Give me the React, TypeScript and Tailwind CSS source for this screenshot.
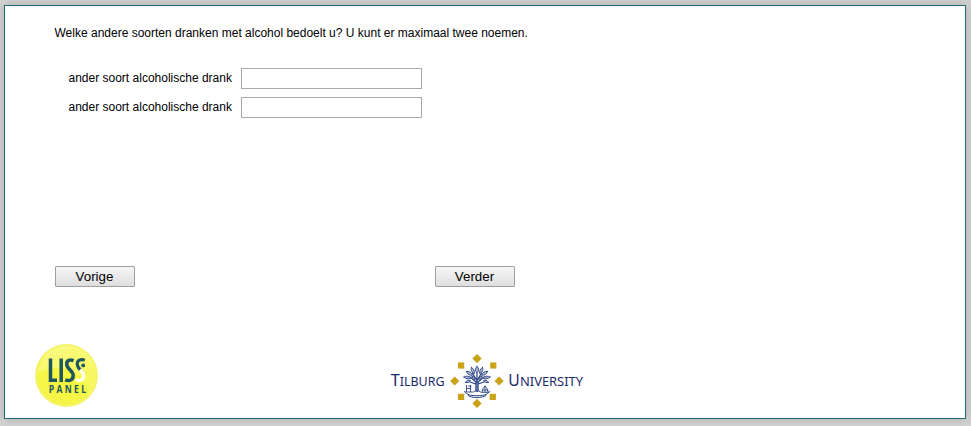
import React from "react";

const NAVY = "#1b2a6b";
const GOLD = "#c9a218";

function AnswerRow({ id }: { id: string }) {
  return (
    <div className="flex h-[21px] items-center">
      <label htmlFor={id} className="w-[172.5px] pb-[2px] text-[12px] leading-[14px] whitespace-nowrap">
        ander soort alcoholische drank
      </label>
      <input id={id} type="text" className="h-[21px] w-[181px] border border-[#a9a9a9] bg-white px-1 text-[12px] outline-none" />
    </div>
  );
}

function NavButton({ label }: { label: string }) {
  return (
    <button
      type="button"
      className="flex h-[21px] w-20 items-center justify-center rounded-[1px] border border-[#a0a0a0] bg-linear-to-b from-[#f6f6f6] to-[#dedede] pr-px text-[13.333px] leading-[15px] text-black"
    >
      {label}
    </button>
  );
}

function LissLogo() {
  return (
    <svg width="64" height="64" viewBox="0 0 64 64" className="block">
      <defs>
        <radialGradient id="ball" cx="50%" cy="50%" r="50%">
          <stop offset="0" stopColor="#f7f73c" />
          <stop offset="0.9" stopColor="#f5f549" />
          <stop offset="1" stopColor="#f3f37c" />
        </radialGradient>
        <linearGradient id="shine" x1="0" y1="0" x2="0.4" y2="1">
          <stop offset="0" stopColor="#ffffc0" stopOpacity="0.5" />
          <stop offset="1" stopColor="#ffff90" stopOpacity="0.3" />
        </linearGradient>
      </defs>
      <circle cx="31.5" cy="31.5" r="31.5" fill="url(#ball)" />
      <path d="M3 29C6 10 18 2 32 2c18 0 29 14 29 30 0 8-3 15-8 20C55 32 30 16 3 29Z" fill="url(#shine)" />
      <g fill="none" stroke="#1d5560" strokeWidth="3.5">
        <path d="M15.500 14.500v21.800h6.500" />
        <path d="M26.200 14.500v23.600" />
        <path d="M38.600 16.700c-3.700-1.500-6.900-.4-6.900 3.200 0 5.300 6.500 6.300 6.500 11.700 0 4.500-3.700 5.800-8 4.200" />
        <path d="M49.800 16.100c-4-1.300-7.600 0-7.600 3.800 0 2.700 1.700 4.500 3.400 6.300" strokeWidth="3.100" />
      </g>
      <path d="M45 25.700c2.200 2.100 3.600 3.800 3.600 6.200 0 4.200-3.600 5.500-8 3.900" fill="none" stroke="#fffff0" strokeWidth="3.300" />
      <circle cx="48.200" cy="21.400" r="1.900" fill="#1d5560" />
      <text
        transform="translate(13.700 48.600) scale(0.860 1)"
        textLength="43.500"
        lengthAdjust="spacing"
        fontFamily="'Open Sans', sans-serif"
        fontWeight="700"
        fontSize="10"
        fill="#1d5560"
      >
        PANEL
      </text>
    </svg>
  );
}

function Crest() {
  return (
    <svg width="54" height="54" viewBox="0 0 54 54" className="block">
      <g fill={GOLD}>
        <path d="M27 0l4.600 4.600L27 9.200l-4.600-4.600Z" />
        <path d="M27 44.800l4.600 4.600L27 54l-4.600-4.600Z" />
        <path d="M4.700 22.400L9.300 27l-4.600 4.600L.1 27Z" />
        <path d="M49.100 22.400l4.600 4.600-4.600 4.600-4.600-4.600Z" />
        <path d="M8 8.400h6.200v6.200H8Z" />
        <path d="M40.200 8.400h6.200v6.200h-6.200Z" />
        <path d="M8 39.800h6.200V46H8Z" />
        <path d="M39.700 39.800h6.200V46h-6.200Z" />
      </g>
      <g fill="none" stroke="#2b4385" strokeWidth="0.900" strokeLinejoin="round" strokeLinecap="round">
        <path d="M26 37V28l-6-5M28 37V28l6-5M27 28V19M26.500 26l-4-7M27.500 26l4-7M26 30l-6-2M28 30l6-2" strokeWidth="1.200" />
        <g fill="#a9b4d2">
          <path d="M27 12.500c-2.500 2.500-2 4.500 0 6.500 2-2 2.500-4 0-6.500Z" />
          <path d="M21.500 13.500c-1 3 0 5 3 6 0-3-1-5-3-6ZM32.500 13.500c1 3 0 5-3 6 0-3 1-5 3-6Z" />
          <path d="M16.500 17.500c1 3 3 4 6 3.500-1-2.500-3-4-6-3.500ZM37.500 17.500c-1 3-3 4-6 3.500 1-2.500 3-4 6-3.500Z" />
          <path d="M14 23c2 2 4 2.500 7 1-2-2-5-2.500-7-1ZM40 23c-2 2-4 2.500-7 1 2-2 5-2.500 7-1Z" />
          <path d="M15.500 28.500c2 .5 4 0 5-2-2-1-4 0-5 2ZM38.500 28.500c-2 .5-4 0-5-2 2-1 4 0 5 2Z" />
          <path d="M22 22c0 2 1 3 3 3.500 0-2-1-3-3-3.500ZM32 22c0 2-1 3-3 3.500 0-2 1-3 3-3.500Z" />
        </g>
        <path d="M16.500 31.500v6M16.500 34.500h4M18.500 32h2.500M20.500 31.500v6M15.500 38h7M23.500 38l2.500-1.500 1 1.500 1-1.500 2.500 1.500M32 38l1-3.500 2-2.500 2 2.500 1 3.500M32.500 36h5.500M31.500 38.300h7.500M35 32v6" />
        <path d="M14.500 37.500c2 3.500 7 4.200 12.500 4.200s10.500-.7 12.500-4.200M18 41.500c4 2.800 14 2.800 18 0" strokeWidth="1" />
      </g>
      <path d="M25.800 27h2.400l.5 10h-3.400Z" fill="#2b4385" opacity="0.450" />
    </svg>
  );
}

function TilburgLogo() {
  return (
    <svg width="194" height="54" viewBox="0 0 194 54" className="block" role="img" aria-label="Tilburg University">
      <g fontFamily="'Noto Sans', 'Open Sans', sans-serif" fill={NAVY}>
        <text x="0.700" y="32" fontSize="16" textLength="9" lengthAdjust="spacingAndGlyphs">T</text>
        <text x="9.700" y="32" fontSize="13" textLength="44.800" lengthAdjust="spacingAndGlyphs">ILBURG</text>
        <text x="118.200" y="32" fontSize="16" textLength="11.500" lengthAdjust="spacingAndGlyphs">U</text>
        <text x="130" y="32" fontSize="13" textLength="63" lengthAdjust="spacingAndGlyphs">NIVERSITY</text>
      </g>
      <g transform="translate(60 0)">
        <Crest />
      </g>
    </svg>
  );
}

export default function App() {
  return (
    <div className="h-[426px] w-[971px] overflow-hidden bg-[#d3d3d3] pt-[5px] pl-1 font-['Liberation_Sans',Arial,sans-serif] text-black">
      <main className="flex h-[414px] w-[962px] flex-col border border-[#216a70] bg-white pl-[49.5px] shadow-[0_0_10px_#aaaaaa]">
        <p className="mt-5 h-[14px] text-[12px] leading-[14px]">
          Welke andere soorten dranken met alcohol bedoelt u? U kunt er maximaal twee noemen.
        </p>
        <div className="mt-7 ml-[14px] flex flex-col gap-2">
          <AnswerRow id="drank-1" />
          <AnswerRow id="drank-2" />
        </div>
        <div className="mt-[148px] ml-[0.5px] flex gap-[300px]">
          <NavButton label="Vorige" />
          <NavButton label="Verder" />
        </div>
        <footer className="mt-[57px] ml-[-19.5px] flex items-start gap-[291px]">
          <LissLogo />
          <div className="pt-[10px]">
            <TilburgLogo />
          </div>
        </footer>
      </main>
    </div>
  );
}
